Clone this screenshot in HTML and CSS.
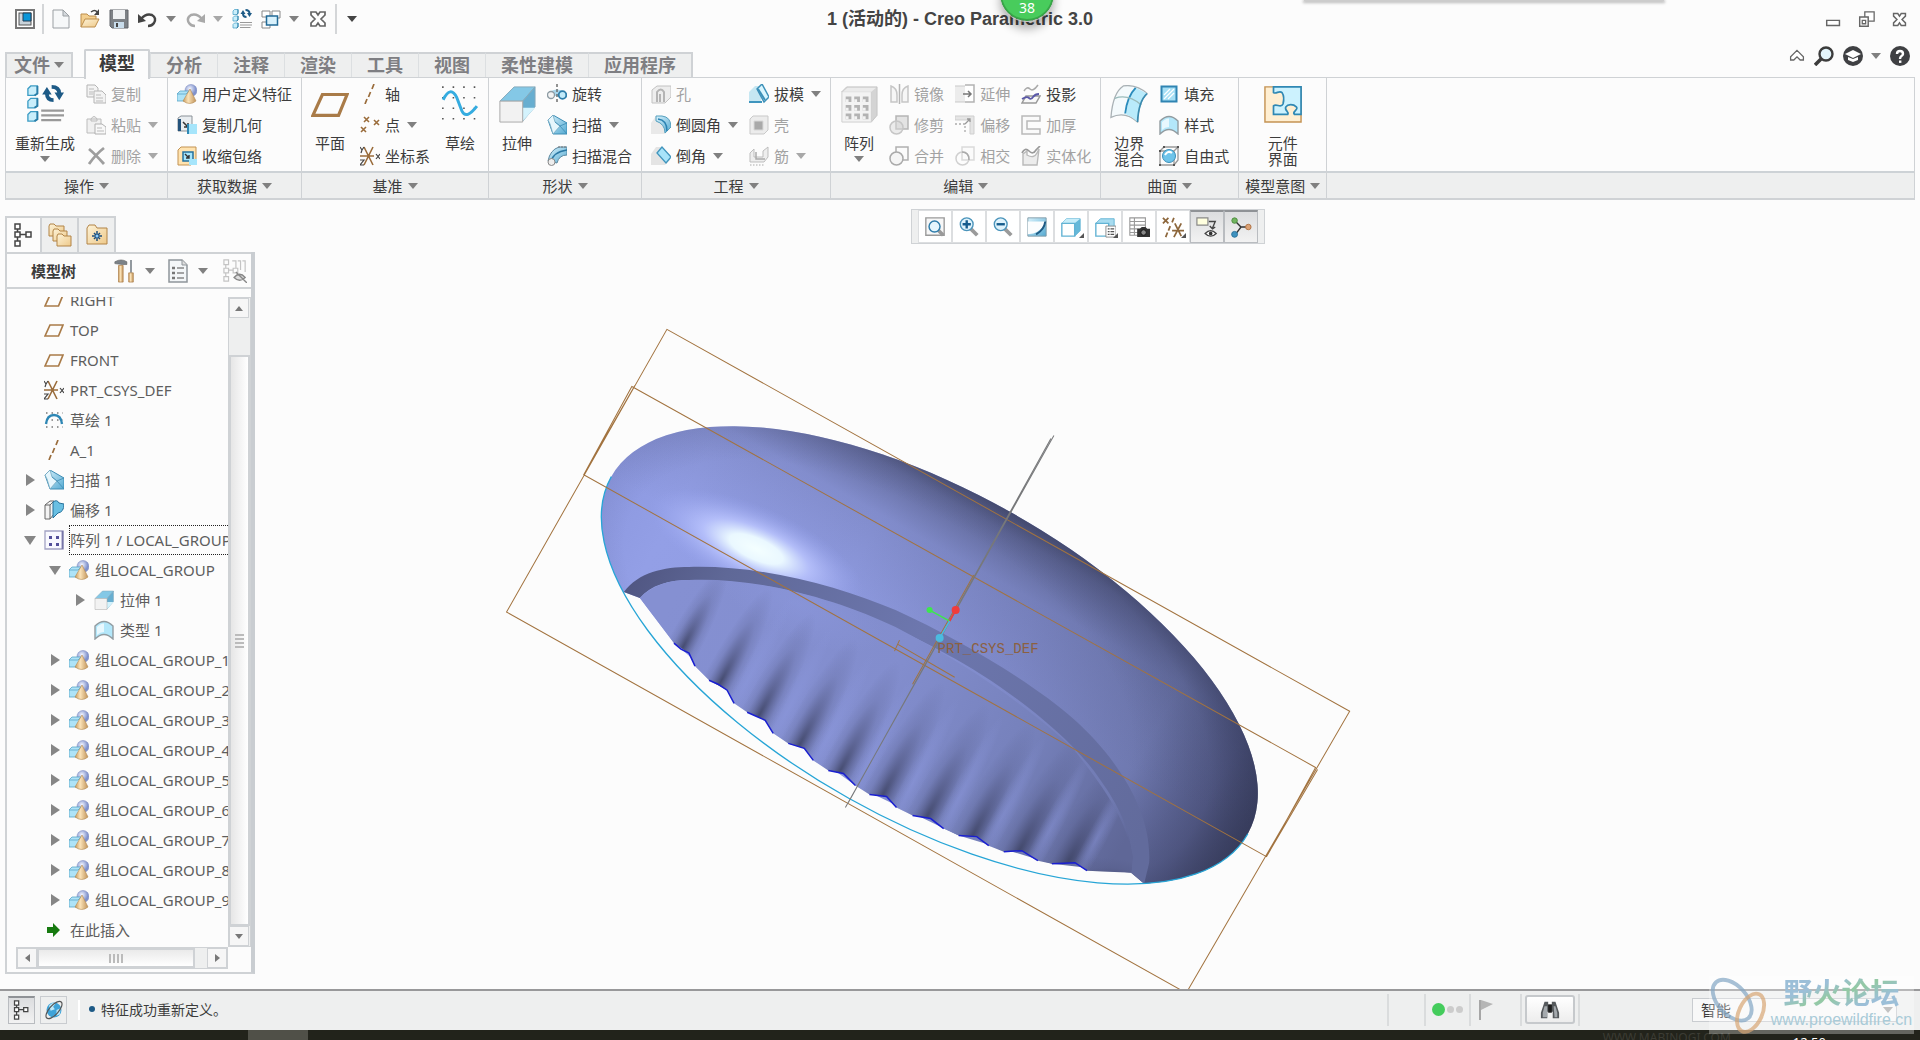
FILE: index.html
```
<!DOCTYPE html>
<html lang="zh-CN">
  <head>
    <meta charset="UTF-8" />
    <meta name="viewport" content="width=device-width, initial-scale=1.0" />
    <title>1 (活动的) - Creo Parametric 3.0</title>
    <link rel="stylesheet" href="styles.css">
  </head>
  <body>
    <!-- shared icons -->
    <svg class="sprite" aria-hidden="true">
      <defs>
        <linearGradient id="gBlue" x1="0" y1="0" x2="1" y2="1">
          <stop offset="0" stop-color="#d8f2fc" />
          <stop offset="1" stop-color="#55aad2" />
        </linearGradient>
        <linearGradient id="gCone" x1="0" x2="1">
          <stop offset="0" stop-color="#c89a5c" />
          <stop offset="0.4" stop-color="#fbe3b8" />
          <stop offset="1" stop-color="#c1935a" />
        </linearGradient>
        <linearGradient id="gFolder" x1="0" y1="0" x2="1" y2="1">
          <stop offset="0" stop-color="#fdf3d8" />
          <stop offset="1" stop-color="#eec98a" />
        </linearGradient>
        <radialGradient id="gBall" cx="0.4" cy="0.35">
          <stop offset="0" stop-color="#f2f5ff" />
          <stop offset="1" stop-color="#8092cc" />
        </radialGradient>
      </defs>
      <symbol id="app" viewBox="0 0 20 20"><rect x="1" y="1" width="18" height="18" fill="#fff" stroke="#777" stroke-width="2" /><rect x="4" y="4" width="12" height="12" fill="#c9d3da" stroke="#555" /><path d="M8 4h8v8H8z" fill="#0a96d8" stroke="#223c55" /></symbol>
      <symbol id="new" viewBox="0 0 20 20"><path d="M2 1h10l6 6v12H2z" fill="#f6f8f9" stroke="#9a9fa3" /><path d="M12 1l6 6h-6z" fill="#d5dade" stroke="#9a9fa3" /></symbol>
      <symbol id="open" viewBox="0 0 20 20"><path d="M1 18V5h6l2 2h7v3" fill="#f3cf8f" stroke="#bd8e4c" /><path d="M1 18l4-8h14l-4 8z" fill="url(#gFolder)" stroke="#bd8e4c" /><path d="M11 3q4-3 6 0" fill="none" stroke="#444" stroke-width="1.500" /><path d="M19 0v6h-5z" fill="#444" /></symbol>
      <symbol id="save" viewBox="0 0 20 20"><path d="M1 1h18v18H3l-2-2z" fill="#7c8186" stroke="#60656a" /><path d="M4 1h12v9H4z" fill="#eef1f3" /><path d="M5 13h10v6H5z" fill="#c8dceb" /><path d="M7 14h2v4H7z" fill="#444" /></symbol>
      <symbol id="undo" viewBox="0 0 20 20"><path d="M3 10q5-6 11-4 5 3 2 8-2 3-6 3" fill="none" stroke="#444" stroke-width="2.400" /><path d="M0 5v9l8-2z" fill="#444" /></symbol>
      <symbol id="redo" viewBox="0 0 20 20"><path d="M17 10q-5-6-11-4-5 3-2 8 2 3 6 3" fill="none" stroke="#a9a9a9" stroke-width="2.400" /><path d="M20 5v9l-8-2z" fill="#a9a9a9" /></symbol>
      <symbol id="regen" viewBox="0 0 40 40"><g fill="#c9eefb" stroke="#3c9cc4" stroke-width="1.400"><path d="M2 4l3-3h7v8l-3 2H2zM2 17l3-3h7v8l-3 2H2zM2 31l3-3h7v8l-3 2H2z" /></g><path d="M9 11l3-2V1M9 24l3-2v-8M9 38l3-2v-8" fill="none" stroke="#2b7ea8" stroke-width="2" /><path d="M16 27h24M16 32h24M16 37h21" stroke="#999" stroke-width="2.400" /><path d="M29 16Q22 16 22 9M27 2q8 0 8 7" fill="none" stroke="#1d5a86" stroke-width="4" /><path d="M17 10h10l-5-8zM30 8h10l-5 8z" fill="#1d5a86" /></symbol>
      <symbol id="windows" viewBox="0 0 20 20"><g fill="#fff" stroke="#888"><path d="M1 2h8v6H1zM1 13h8v6H1zM11 2h8v7h-8z" /></g><rect x="5.500" y="7" width="11" height="9" fill="#d8f1fc" stroke="#226a96" stroke-width="1.500" /></symbol>
      <symbol id="cross" viewBox="0 0 20 20"><path d="M3 3h5l2 3 2-3h5v3l-4 4 4 4v3h-5l-2-3-2 3H3v-3l4-4-4-4z" fill="#fff" stroke="#666" stroke-width="1.700" /></symbol>
      <symbol id="mini" viewBox="0 0 20 20"><path d="M2 11h15v6H2z" fill="#fff" stroke="#666" stroke-width="1.700" /></symbol>
      <symbol id="restore" viewBox="0 0 20 20"><path d="M8 1h11v11H8z" fill="#fff" stroke="#666" stroke-width="1.500" /><path d="M2 7h10v11H2z" fill="#fff" stroke="#666" stroke-width="1.700" /><path d="M5 11h4v4H5z" fill="none" stroke="#666" stroke-width="1.500" /></symbol>
      <symbol id="chev" viewBox="0 0 20 20"><path d="M10 3l8 8v4h-4l-4-4-4 4H2v-4z" fill="#fff" stroke="#666" stroke-width="1.600" /></symbol>
      <symbol id="search" viewBox="0 0 20 20"><circle cx="12" cy="8" r="6.500" fill="#e3f4fb" stroke="#3c3c3c" stroke-width="2.400" /><path d="M7 13l-6 6" stroke="#3c3c3c" stroke-width="3.500" /></symbol>
      <symbol id="grad" viewBox="0 0 20 20"><circle cx="10" cy="10" r="10" fill="#3f4043" /><path d="M2 8l8-4 8 4-8 4zM5 11v3l5 2 5-2v-3l-5 2z" fill="#fff" /></symbol>
      <symbol id="help" viewBox="0 0 20 20"><circle cx="10" cy="10" r="10" fill="#3f4043" /><path d="M7 8q0-3 3-3t3 3q0 1-1.500 2T10 13" fill="none" stroke="#fff" stroke-width="2.400" /><path d="M9 14.500h2.400v2.400H9z" fill="#fff" /></symbol>
      <symbol id="copy" viewBox="0 0 20 20"><g fill="#f3f3f3" stroke="#b5b5b5"><path d="M1 1h8l3 3v9H1z" /><path d="M8 7h8l4 4v8H8z" /></g><path d="M3 5h5M3 8h4M3 10h4M10 11h5M10 14h7M10 17h7" stroke="#bbb" /></symbol>
      <symbol id="paste" viewBox="0 0 20 20"><path d="M1 4h14v14H1zM5 4q3-5 6 0v2H5z" fill="#f0f0f0" stroke="#bcbcbc" /><path d="M9 9h7l4 3v7H9z" fill="#f8f8f8" stroke="#b0b0b0" /><path d="M11 13h5M11 16h7" stroke="#bbb" /></symbol>
      <symbol id="del" viewBox="0 0 20 20"><path d="M3 3q6 5 15 15M18 2Q10 8 3 18" fill="none" stroke="#9e9e9e" stroke-width="2.800" /></symbol>
      <symbol id="udf" viewBox="0 0 20 20"><circle cx="14" cy="6.500" r="6" fill="url(#gBall)" stroke="#8492c4" stroke-width="0.600" /><path d="M0 10l3-3h9l-2 10H0z" fill="#aee3f7" stroke="#59a5c6" stroke-width="0.800" /><path d="M0 10h9l3-3" fill="none" stroke="#59a5c6" stroke-width="0.800" /><path d="M13 5l6 12q-6 5-13 0z" fill="url(#gCone)" stroke="#b48a52" stroke-width="0.600" /></symbol>
      <symbol id="geom" viewBox="0 0 20 20"><path d="M1 3l3-2h11v15H1z" fill="#e9edf0" stroke="#8b9298" /><path d="M1 4h3v12H1z" fill="#24537b" /><path d="M6 7l5 5m0-4v4H7" stroke="#333" stroke-width="1.500" fill="none" /><path d="M11 9h9v10h-9z" fill="#a6e5fb" /><path d="M11 9v10" stroke="#2f88b4" stroke-width="2" /></symbol>
      <symbol id="shrink" viewBox="0 0 20 20"><path d="M1 4l3-3h15v13l-5 5H1z" fill="#ffe3b0" stroke="#c39352" /><path d="M6 6h10v9H6z" fill="#a6e5fb" stroke="#25719e" stroke-width="1.500" /><path d="M8 8l4 4m0-3v3H9" stroke="#333" stroke-width="1.400" fill="none" /><path d="M12 13h8v6h-8z" fill="#a6e5fb" /></symbol>
      <symbol id="plane" viewBox="0 0 20 20"><path d="M6 5h13l-4.500 11H1z" fill="none" stroke="#a97b48" stroke-width="1.700" /></symbol>
      <symbol id="axis" viewBox="0 0 20 20"><path d="M14 0l-2 5M10.500 8l-2 5M7 15l-2 5" stroke="#9a6c3b" stroke-width="1.700" /></symbol>
      <symbol id="points" viewBox="0 0 20 20"><path d="M4 2l5 5m0-5L4 7M14 5l5 5m0-5l-5 5M1 12l5 5m0-5l-5 5" stroke="#9a6c3b" stroke-width="1.600" /></symbol>
      <symbol id="csys" viewBox="0 0 20 20"><path d="M0 10h14M4 1l9 18M13 1L4 19" stroke="#9a6c3b" stroke-width="1.600" /><path d="M0 1l2 3 2-3M2 4L1 7M0 14h4l-4 5h4M16 8l4 5m0-5l-4 5" fill="none" stroke="#444" stroke-width="1.200" /></symbol>
      <symbol id="sketch" viewBox="0 0 36 36"><path d="M1 2h34M1 12h34M1 22h34M1 32h34" stroke="#555" stroke-width="1.500" stroke-dasharray="1.500 8.500" /><path d="M2 14Q9 0 15 12q3 8 5 13 4 8 14-5" fill="none" stroke="#35ace0" stroke-width="2.800" /></symbol>
      <symbol id="extrude" viewBox="0 0 40 40"><path d="M2 17L17 2h22L26 17z" fill="#84c8e6" stroke="#85a9ba" /><path d="M39 2v21L26 38V17z" fill="#67aed0" stroke="#85a9ba" /><path d="M26 24h13L26 38z" fill="#d4f3fd" /><path d="M2 17h24v22H2z" fill="#f2f2f2" stroke="#a8a8a8" /></symbol>
      <symbol id="revolve" viewBox="0 0 20 20"><path d="M4 7q6-3 12 0v5H4z" fill="#84c5e4" opacity="0.700" /><path d="M10 0v20" stroke="#666" stroke-width="1.400" stroke-dasharray="3 2" /><circle cx="4" cy="11" r="3.500" fill="#f3f3f3" stroke="#8d9ba3" stroke-width="1.300" /><circle cx="15.500" cy="11" r="3.800" fill="#c2ebfa" stroke="#2e7eaa" stroke-width="1.800" /></symbol>
      <symbol id="sweep" viewBox="0 0 20 20"><path d="M1 5l5-5 14 8v11H6z" fill="url(#gBlue)" stroke="#3c8cb4" /><path d="M1 5l5-5 2 7 5 4L6 19 3 9z" fill="#e6f6fc" stroke="#75a9c2" stroke-width="0.800" /><path d="M13 11l7 8M8 7l5 4 7-3" stroke="#3c8cb4" fill="none" stroke-width="0.800" /></symbol>
      <symbol id="sblend" viewBox="0 0 20 20"><path d="M1 15Q3 4 12 1h8v8q-8 0-10 8z" fill="url(#gBlue)" stroke="#5b88a0" /><path d="M4 16Q6 6 20 4" fill="none" stroke="#2b78a4" stroke-width="1.500" /><circle cx="4.500" cy="16" r="3.500" fill="#eee" stroke="#888" /><path d="M11 1h9" stroke="#777" stroke-dasharray="2 1" /></symbol>
      <symbol id="hole" viewBox="0 0 20 20"><path d="M1 6l5-4h14v11l-6 6H1z" fill="#ededed" stroke="#c2c2c2" /><path d="M6 18V8q4-5 7 0v10M9 18V10" fill="none" stroke="#b4b4b4" stroke-width="2" /></symbol>
      <symbol id="round" viewBox="0 0 20 20"><path d="M0 8l5-7h6l8 8v5l-5 5H0z" fill="#e9e9e9" /><path d="M5 1h6q9 1 9 11l-6 6q0-9-9-12z" fill="url(#gBlue)" stroke="#559fbe" /><path d="M7 4q9 1 9 12" fill="none" stroke="#2b82b2" stroke-width="1.500" /></symbol>
      <symbol id="chamfer" viewBox="0 0 20 20"><path d="M0 8l5-7h6l8 8v5l-5 5H0z" fill="#e4e4e4" /><path d="M6 7l5-6 9 10-5 6z" fill="#a8e4fa" stroke="#4195bd" stroke-width="1.300" /></symbol>
      <symbol id="draft" viewBox="0 0 20 20"><path d="M0 8l6-6h6v17H0z" fill="#c6e7f2" /><path d="M0 17h13v2H0z" fill="#3f95be" /><path d="M8 5l5-5 7 13-5 5z" fill="#d9f5fe" stroke="#3c90b8" stroke-width="1.500" /><path d="M9 5l7 11" stroke="#3c90b8" stroke-width="2" /></symbol>
      <symbol id="shell" viewBox="0 0 20 20"><path d="M1 4l3-3h15v14l-4 4H1z" fill="#ececec" stroke="#c9c9c9" /><path d="M5 6h9v9H5z" fill="#a9a9a9" stroke="#d8d8d8" /></symbol>
      <symbol id="rib" viewBox="0 0 20 20"><path d="M1 7l4-4v8h9V5l5-4v10l-4 5H1z" fill="#eee" stroke="#bdbdbd" /><path d="M7 6v7h9" fill="none" stroke="#aaa" stroke-width="1.500" /><path d="M1 19h15" stroke="#aaa" stroke-dasharray="1.500 1.500" /></symbol>
      <symbol id="pattern" viewBox="0 0 40 40"><path d="M2 7l5-5h32v30l-6 7z" fill="#d4d4d4" stroke="#c5c5c5" /><path d="M2 7h31v32H2z" fill="#f3f3f3" stroke="#cfcfcf" /><path d="M3 7l5-4h30l-5 4z" fill="#ebebeb" /><g fill="#b3b3b3"><path d="M6 12h6v6H6zM15 12h6v6h-6zM24 12h6v6h-6zM6 21h6v6H6zM15 21h6v6h-6zM24 21h6v6h-6zM6 30h6v6H6zM15 30h6v6h-6zM24 30h6v6h-6z" /></g><g fill="#f3f3f3"><path d="M6 15h3v3H6zM15 15h3v3h-3zM24 15h3v3h-3zM6 24h3v3H6zM15 24h3v3h-3zM24 24h3v3h-3zM6 33h3v3H6zM15 33h3v3h-3zM24 33h3v3h-3z" /></g></symbol>
      <symbol id="mirror" viewBox="0 0 20 20"><path d="M2 2q6 2 6 9v7H2zM19 2q-6 2-6 9v7h6z" fill="#f6f6f6" stroke="#c6c6c6" stroke-width="1.500" /><path d="M10.500 0v20" stroke="#b5b5b5" stroke-width="1.500" /></symbol>
      <symbol id="trim" viewBox="0 0 20 20"><path d="M7 1h12v13H7z" fill="#e3e3e3" stroke="#b5b5b5" stroke-width="1.500" /><circle cx="7.500" cy="12.500" r="6.500" fill="#d9d9d9" fill-opacity="0.500" stroke="#c6c6c6" stroke-width="1.500" /></symbol>
      <symbol id="merge" viewBox="0 0 20 20"><path d="M7 1h12v13H7z" fill="#fbfbfb" stroke="#b0b0b0" stroke-width="1.500" /><circle cx="7.500" cy="12.500" r="6.500" fill="#f5f5f5" stroke="#aaa" stroke-width="1.500" /></symbol>
      <symbol id="inter" viewBox="0 0 20 20"><path d="M7 1h12v13H7z" fill="#fbfbfb" stroke="#dadada" stroke-width="1.500" /><circle cx="7.500" cy="12.500" r="6.500" fill="none" stroke="#d0d0d0" stroke-width="1.500" /><path d="M7 6q7 0 7 8" stroke="#aaa" stroke-width="1.500" fill="none" /></symbol>
      <symbol id="extend" viewBox="0 0 20 20"><path d="M10 1h9v17h-9" fill="#fff" stroke="#b2b2b2" stroke-width="1.500" /><path d="M0 2h10v16H0z" fill="#ececec" /><path d="M0 2h10M0 18h10" stroke="#c9c9c9" /><path d="M8 10h8m-3-3l3 3-3 3" fill="none" stroke="#777" stroke-width="1.500" /></symbol>
      <symbol id="offset" viewBox="0 0 20 20"><path d="M0 1h19v18h-4V5H0z" fill="#e5e5e5" stroke="#cfcfcf" /><path d="M0 9h10v10" fill="none" stroke="#aaa" stroke-width="1.300" stroke-dasharray="2 2" /><path d="M10 9l5-5m-3 0h3v3" fill="none" stroke="#999" stroke-width="1.300" /></symbol>
      <symbol id="project" viewBox="0 0 20 20"><path d="M3 7q3-5 6-2t8-4" fill="none" stroke="#aaa" stroke-width="1.500" /><path d="M5 12h14l-4 7H1z" fill="#f8f8f8" stroke="#999" stroke-width="1.500" /><path d="M1 15q5-3 7-1t4-1 6-3" fill="none" stroke="#5a58a8" stroke-width="1.800" /></symbol>
      <symbol id="thick" viewBox="0 0 20 20"><path d="M1 1h18v5H6v8h13v5H1z" fill="#fafafa" stroke="#b9b9b9" stroke-width="1.500" /></symbol>
      <symbol id="solid" viewBox="0 0 20 20"><path d="M2 8l4-3v4q7 4 10-2l2-4-2 16H2z" fill="#ececec" stroke="#b9b9b9" stroke-width="1.400" /><path d="M1 7q3-6 7-2t7-1l4-4" fill="none" stroke="#999" stroke-width="1.700" /></symbol>
      <symbol id="boundary" viewBox="0 0 40 40"><path d="M1 34Q3 8 14 1q14-2 25 8-9 8-10 30Q16 27 1 34z" fill="#f4fafc" stroke="#a9b1b5" stroke-width="1.400" /><path d="M27 3l12 6q-9 8-10 30-6-6-12-8 2-20 10-28z" fill="#b9ebfb" /><path d="M27 3q-9 9-11 27" fill="none" stroke="#2a8cbc" stroke-width="2" /><path d="M5 14q14-5 28 7" fill="none" stroke="#9bb" stroke-width="1.500" /><path d="M39 9q-9 8-10 30" fill="none" stroke="#3a8bb0" stroke-width="1.800" /></symbol>
      <symbol id="fill" viewBox="0 0 20 20"><path d="M2.500 2.500h15v15h-15z" fill="#a5dff5" stroke="#2f84b2" stroke-width="2" /><path d="M5 11l6-6M5 15L15 5M9 15l6-6" stroke="#fff" stroke-width="1.300" /></symbol>
      <symbol id="style" viewBox="0 0 20 20"><path d="M1 18V6q9-9 18 0v13q-9-9-18 0z" fill="#b3e7fa" stroke="#929ca1" stroke-width="1.400" /><path d="M3 15V7q4-4 7-3.500V12q-4 0-7 3z" fill="#e8f8fe" /></symbol>
      <symbol id="free" viewBox="0 0 20 20"><path d="M1 5l4-4h14v13l-4 5H1zM1 5h14v14M15 5l4-4" fill="none" stroke="#999" stroke-width="1.300" /><circle cx="10" cy="10" r="6.500" fill="#6ec4ea" stroke="#3b8fb9" /><path d="M6 9q3-5 7-2" stroke="#fff" stroke-width="2" fill="none" /><path d="M0 4h2v2H0zM4 0h2v2H4zM18 0h2v2h-2zM0 18h2v2H0zM14 18h2v2h-2z" fill="#555" /></symbol>
      <symbol id="comp" viewBox="0 0 40 40"><path d="M1 2h38v37H1z" fill="#ffefd2" stroke="#c49253" stroke-width="1.500" /><path d="M10 2h29v29h-7c-3-3 5-5 2-8-3-3-9-3-11 0-2 4 4 5 2 8H10v-9c3-3 8 3 10-2 1-4 1-9-1-12-3-3-6 2-9 0z" fill="#ccf2fe" stroke="#2f88b4" stroke-width="1.800" /></symbol>
      <symbol id="tree" viewBox="0 0 20 24"><path d="M1 1h5v5H1zM1 9h5v5H1zM1 18h5v5H1zM12 9h5v5h-5z" fill="#fff" stroke="#444" stroke-width="1.500" /><path d="M3.500 6v3M3.500 14v4M6 11.500h6" stroke="#444" stroke-width="1.500" /></symbol>
      <symbol id="folders" viewBox="0 0 24 24"><g fill="url(#gFolder)" stroke="#b28447"><path d="M1 13V3l1-2h4l2 2h8v10z" /><path d="M5 18V8l1-2h4l2 2h7v10z" /><path d="M9 23V13l1-2h4l2 2h7v10z" /></g></symbol>
      <symbol id="fav" viewBox="0 0 24 24"><path d="M2 21V5l2-3h6l2 3h10v16z" fill="url(#gFolder)" stroke="#b28447" /><path d="M12 8v10M7 13h10M9 10l6 6M15 10l-6 6" stroke="#1c4e7c" stroke-width="1.500" /><circle cx="12" cy="13" r="1.500" fill="#8cf" /></symbol>
      <symbol id="tools" viewBox="0 0 24 26"><path d="M1 3q7-4 13 0v3H9L1 5z" fill="#7b8288" stroke="#555" stroke-width="0.600" /><path d="M5 7h5v18H5z" fill="url(#gCone)" stroke="#a5743c" stroke-width="0.700" /><path d="M18.500 1v14" stroke="#8a9197" stroke-width="2" /><path d="M16 15h5v10h-5z" fill="url(#gCone)" stroke="#a5743c" stroke-width="0.700" /></symbol>
      <symbol id="list" viewBox="0 0 20 24"><path d="M1 1h13l5 5v17H1z" fill="#f3f6f8" stroke="#8f959a" stroke-width="1.500" /><path d="M14 1v5h5" fill="#ddd" stroke="#8f959a" /><path d="M4 9h3M4 14h3M4 19h3" stroke="#777" stroke-width="2.500" /><path d="M9 9h7M9 14h7M9 19h7" stroke="#888" stroke-width="1.500" /></symbol>
      <symbol id="hide" viewBox="0 0 26 26"><path d="M1 1h5v5H1zM1 10h5v5H1zM1 19h5v5H1zM11 10h5v5h-5zM3 6v4M3 15v4M6 12h5M10 2h4v8M16 2h3v10M21 2h3v12" fill="none" stroke="#c4c4c4" stroke-width="1.300" /><path d="M12 20q6-7 12 0-6 6-12 0zM14 14l12 12" fill="#ddd" stroke="#888" stroke-width="1.500" /></symbol>
      <symbol id="arc" viewBox="0 0 20 20"><path d="M2 3h17M2 10h17M2 17h17" stroke="#777" stroke-dasharray="1.500 4" stroke-width="1.500" /><path d="M2 14Q3 5 10 5t8 9" fill="none" stroke="#2d86b4" stroke-width="2.400" /></symbol>
      <symbol id="offt" viewBox="0 0 20 20"><path d="M1 5l5-4h4v13l-4 5H1zM1 5h5v14M6 5l4-4" fill="#f3f3f3" stroke="#666" /><path d="M9 2q4-3 6 1l5 1q0 8-6 9l-5 5z" fill="#69bfe2" stroke="#27719a" /></symbol>
      <symbol id="ptrn" viewBox="0 0 20 20"><path d="M1 1h18v18H1z" fill="#f9f9ff" stroke="#a3a3c4" stroke-width="1.300" /><path d="M18.500 1v18" stroke="#7775a8" stroke-width="1.800" /><path d="M5 6h3v3H5zM12 6h3v3h-3zM5 13h3v3H5zM12 13h3v3h-3z" fill="#54509a" /></symbol>
      <symbol id="insert" viewBox="0 0 20 20"><path d="M3 7h6V3l7 7-7 7v-4H3z" fill="#177a10" /></symbol>
      <symbol id="zfit" viewBox="0 0 24 24"><path d="M2 2h20v19H2z" fill="#f7f7f7" stroke="#9a9a9a" stroke-width="1.500" /><path d="M15 15l6 6" stroke="#9a9a9a" stroke-width="4" /><circle cx="11.500" cy="11.500" r="6" fill="#e5f6fd" stroke="#2f7dab" stroke-width="1.600" /></symbol>
      <symbol id="zin" viewBox="0 0 24 24"><path d="M14 14l7 7" stroke="#9a9a9a" stroke-width="4" /><circle cx="9.500" cy="9" r="7" fill="#dff3fc" stroke="#4b94bb" stroke-width="1.500" /><path d="M5 9h9M9.500 4.500v9" stroke="#155c8d" stroke-width="2.600" /></symbol>
      <symbol id="zout" viewBox="0 0 24 24"><path d="M14 14l7 7" stroke="#9a9a9a" stroke-width="4" /><circle cx="9.500" cy="9" r="7" fill="#dff3fc" stroke="#4b94bb" stroke-width="1.500" /><path d="M5 9h9" stroke="#155c8d" stroke-width="2.600" /></symbol>
      <symbol id="repaint" viewBox="0 0 24 24"><path d="M2 2h20v20H2z" fill="url(#gBlue)" stroke="#809aa6" /><path d="M2 6h19q-3 10-13 13l-6 1z" fill="#fbfdfe" /><path d="M21 6q-1 9-10 14" fill="none" stroke="#1f5a83" stroke-width="2.200" /></symbol>
      <symbol id="cube" viewBox="0 0 24 24"><path d="M2 8l5-5h15v13l-6 6z" fill="#65b8d9" stroke="#62b3d4" /><path d="M2 8h14l6-5H7z" fill="#c7edf9" /><path d="M2 8h14v14H2z" fill="#fff" stroke="#62b3d4" stroke-width="1.500" /></symbol>
      <symbol id="cubelist" viewBox="0 0 24 24"><path d="M2 8l5-5h15v13l-6 6z" fill="#a8dcf0" stroke="#62b3d4" /><path d="M2 8h14v14H2z" fill="#fff" stroke="#62b3d4" stroke-width="1.500" /><path d="M13 11h11v12H13z" fill="#fff" stroke="#888" /><path d="M15 14h2m1 0h4M15 17h2m1 0h4M15 20h2m1 0h4" stroke="#555" stroke-width="1.300" /></symbol>
      <symbol id="camera" viewBox="0 0 24 24"><path d="M2 2h17v19H2zM2 6h17M2 10h17M2 14h17M2 18h17M7 2v19" fill="#fff" stroke="#999" stroke-width="1.200" /><path d="M10 14h3l2-2h4l2 2h3v9H10z" fill="#333" /><circle cx="17" cy="18" r="3" fill="#888" stroke="#111" /></symbol>
      <symbol id="datum" viewBox="0 0 24 24"><path d="M1 2l6 6m0-6L1 8M13 2l-2 5M9 11l-2 5M6 18l-2 5M11 16h13M14 8l7 14M21 8l-8 15" stroke="#8d673c" stroke-width="1.900" /></symbol>
      <symbol id="annot" viewBox="0 0 24 24"><path d="M1 2h12v8H1z" fill="#ffffdf" stroke="#888" stroke-width="1.300" /><path d="M14 6h7l-3 7m-3-2l3 3 3-2" fill="none" stroke="#444" stroke-width="1.500" /><path d="M10 19q6-6 12 0-6 6-12 0z" fill="#fff" stroke="#444" stroke-width="1.500" /><circle cx="16" cy="19" r="2" fill="#333" /></symbol>
      <symbol id="spin" viewBox="0 0 24 24"><path d="M5 5l7 7h8M12 12l-6 8" fill="none" stroke="#333" stroke-width="1.500" /><circle cx="5" cy="5" r="3" fill="#71b45f" stroke="#4b8a3d" /><circle cx="5" cy="20" r="3.200" fill="#3f92bf" stroke="#27719a" /><circle cx="20" cy="12" r="3" fill="#dca276" stroke="#ae7142" /></symbol>
      <symbol id="globe" viewBox="0 0 24 24"><circle cx="12" cy="12" r="9" fill="#3fa3d8" /><path d="M6 7q4-5 8-3l-3 4 2 3-5 2zM15 12l5-2-1 7-4 2z" fill="#bfe8f8" /><ellipse cx="12" cy="12" rx="13" ry="5.500" transform="rotate(-48 12 12)" fill="none" stroke="#555" stroke-width="1.400" /></symbol>
      <symbol id="flag" viewBox="0 0 20 20"><path d="M4 0v20" stroke="#a6a6a6" stroke-width="2" /><path d="M5 0l12 4-12 6z" fill="#b5b5b5" /></symbol>
      <symbol id="bino" viewBox="0 0 22 20"><path d="M5 1h4v3h4V1h4l4 12v6h-7v-7H8v7H1v-6z" fill="#55595c" /><path d="M5 6h3v12H3v-5zM15 6h2l2 7v5h-3z" fill="#a4a9ad" /><path d="M9 4h4v9H9z" fill="#1d1d1d" /></symbol>
    </svg>

    <div class="edge-shadow"></div>
    <div class="badge">38</div>

    <header class="titlebar">
      <div class="quick">
        <button><svg><use href="#app" /></svg></button>
        <i class="sep"></i>
        <button><svg><use href="#new" /></svg></button>
        <button><svg><use href="#open" /></svg></button>
        <button><svg><use href="#save" /></svg></button>
        <button><svg><use href="#undo" /></svg><i class="caret"></i></button>
        <button><svg><use href="#redo" /></svg><i class="caret dim"></i></button>
        <button><svg><use href="#regen" /></svg></button>
        <button><svg><use href="#windows" /></svg><i class="caret"></i></button>
        <button><svg><use href="#cross" /></svg></button>
        <i class="sep"></i>
        <button><i class="caret more"></i></button>
      </div>
      <h1>1 (活动的) - Creo Parametric 3.0</h1>
      <div class="win">
        <button><svg><use href="#mini" /></svg></button>
        <button><svg><use href="#restore" /></svg></button>
        <button><svg><use href="#cross" /></svg></button>
      </div>
    </header>

    <nav class="tabs">
      <button class="tab file">文件<i class="caret"></i></button>
      <button class="tab active">模型</button>
      <button class="tab">分析</button>
      <button class="tab">注释</button>
      <button class="tab">渲染</button>
      <button class="tab">工具</button>
      <button class="tab">视图</button>
      <button class="tab">柔性建模</button>
      <button class="tab last">应用程序</button>
      <div class="tab-tools">
        <button><svg class="small"><use href="#chev" /></svg></button>
        <button><svg><use href="#search" /></svg></button>
        <button><svg><use href="#grad" /></svg><i class="caret"></i></button>
        <button><svg><use href="#help" /></svg></button>
      </div>
    </nav>

    <section class="ribbon">
      <div class="group">
        <div class="group-body">
          <button class="big"><svg><use href="#regen" /></svg><span>重新生成</span><i class="caret"></i></button>
          <div class="col">
            <button class="off"><svg><use href="#copy" /></svg>复制</button>
            <button class="off"><svg><use href="#paste" /></svg>粘贴<i class="caret dim"></i></button>
            <button class="off"><svg><use href="#del" /></svg>删除<i class="caret dim"></i></button>
          </div>
        </div>
        <button class="group-name">操作<i class="caret"></i></button>
      </div>
      <div class="group">
        <div class="group-body">
          <div class="col">
            <button><svg><use href="#udf" /></svg>用户定义特征</button>
            <button><svg><use href="#geom" /></svg>复制几何</button>
            <button><svg><use href="#shrink" /></svg>收缩包络</button>
          </div>
        </div>
        <button class="group-name">获取数据<i class="caret"></i></button>
      </div>
      <div class="group">
        <div class="group-body">
          <button class="big"><svg><use href="#plane" /></svg><span>平面</span></button>
          <div class="col">
            <button><svg><use href="#axis" /></svg>轴</button>
            <button><svg><use href="#points" /></svg>点<i class="caret"></i></button>
            <button><svg><use href="#csys" /></svg>坐标系</button>
          </div>
          <button class="big"><svg><use href="#sketch" /></svg><span>草绘</span></button>
        </div>
        <button class="group-name">基准<i class="caret"></i></button>
      </div>
      <div class="group">
        <div class="group-body">
          <button class="big"><svg><use href="#extrude" /></svg><span>拉伸</span></button>
          <div class="col">
            <button><svg><use href="#revolve" /></svg>旋转</button>
            <button><svg><use href="#sweep" /></svg>扫描<i class="caret"></i></button>
            <button><svg><use href="#sblend" /></svg>扫描混合</button>
          </div>
        </div>
        <button class="group-name">形状<i class="caret"></i></button>
      </div>
      <div class="group">
        <div class="group-body">
          <div class="col">
            <button class="off"><svg><use href="#hole" /></svg>孔</button>
            <button><svg><use href="#round" /></svg>倒圆角<i class="caret"></i></button>
            <button><svg><use href="#chamfer" /></svg>倒角<i class="caret"></i></button>
          </div>
          <div class="col">
            <button><svg><use href="#draft" /></svg>拔模<i class="caret"></i></button>
            <button class="off"><svg><use href="#shell" /></svg>壳</button>
            <button class="off"><svg><use href="#rib" /></svg>筋<i class="caret dim"></i></button>
          </div>
        </div>
        <button class="group-name">工程<i class="caret"></i></button>
      </div>
      <div class="group">
        <div class="group-body">
          <button class="big"><svg><use href="#pattern" /></svg><span>阵列</span><i class="caret"></i></button>
          <div class="col">
            <button class="off"><svg><use href="#mirror" /></svg>镜像</button>
            <button class="off"><svg><use href="#trim" /></svg>修剪</button>
            <button class="off"><svg><use href="#merge" /></svg>合并</button>
          </div>
          <div class="col">
            <button class="off"><svg><use href="#extend" /></svg>延伸</button>
            <button class="off"><svg><use href="#offset" /></svg>偏移</button>
            <button class="off"><svg><use href="#inter" /></svg>相交</button>
          </div>
          <div class="col">
            <button><svg><use href="#project" /></svg>投影</button>
            <button class="off"><svg><use href="#thick" /></svg>加厚</button>
            <button class="off"><svg><use href="#solid" /></svg>实体化</button>
          </div>
        </div>
        <button class="group-name">编辑<i class="caret"></i></button>
      </div>
      <div class="group">
        <div class="group-body">
          <button class="big"><svg><use href="#boundary" /></svg><span>边界<br>混合</span></button>
          <div class="col">
            <button><svg><use href="#fill" /></svg>填充</button>
            <button><svg><use href="#style" /></svg>样式</button>
            <button><svg><use href="#free" /></svg>自由式</button>
          </div>
        </div>
        <button class="group-name">曲面<i class="caret"></i></button>
      </div>
      <div class="group">
        <div class="group-body">
          <button class="big"><svg><use href="#comp" /></svg><span>元件<br>界面</span></button>
        </div>
        <button class="group-name">模型意图<i class="caret"></i></button>
      </div>
      <div class="group rest">
        <div class="group-body"></div>
        <div class="group-name"></div>
      </div>
    </section>

    <main class="work">
      <aside class="side">
        <div class="side-tabs">
          <button class="active"><svg><use href="#tree" /></svg></button>
          <button><svg><use href="#folders" /></svg></button>
          <button><svg><use href="#fav" /></svg></button>
        </div>
        <div class="panel">
          <div class="panel-head">
            <h2>模型树</h2>
            <button><svg><use href="#tools" /></svg><i class="caret"></i></button>
            <button><svg><use href="#list" /></svg><i class="caret"></i></button>
            <button class="hide"><svg><use href="#hide" /></svg></button>
          </div>
          <div class="panel-body">
            <div class="panel-list">
              <ul class="tree">
                <li><i class="twist"></i><svg><use href="#plane" /></svg>RIGHT</li>
                <li><i class="twist"></i><svg><use href="#plane" /></svg>TOP</li>
                <li><i class="twist"></i><svg><use href="#plane" /></svg>FRONT</li>
                <li><i class="twist"></i><svg><use href="#csys" /></svg>PRT_CSYS_DEF</li>
                <li><i class="twist"></i><svg><use href="#arc" /></svg>草绘 1</li>
                <li><i class="twist"></i><svg><use href="#axis" /></svg>A_1</li>
                <li><i class="twist closed"></i><svg><use href="#sweep" /></svg>扫描 1</li>
                <li><i class="twist closed"></i><svg><use href="#offt" /></svg>偏移 1</li>
                <li><i class="twist opened"></i><svg><use href="#ptrn" /></svg><span class="focus">阵列 1 / LOCAL_GROUP</span></li>
                <li class="l2"><i class="twist opened"></i><svg><use href="#udf" /></svg>组LOCAL_GROUP</li>
                <li class="l3"><i class="twist closed"></i><svg><use href="#extrude" /></svg>拉伸 1</li>
                <li class="l3"><i class="twist"></i><svg><use href="#style" /></svg>类型 1</li>
                <li class="l2"><i class="twist closed"></i><svg><use href="#udf" /></svg>组LOCAL_GROUP_1</li>
                <li class="l2"><i class="twist closed"></i><svg><use href="#udf" /></svg>组LOCAL_GROUP_2</li>
                <li class="l2"><i class="twist closed"></i><svg><use href="#udf" /></svg>组LOCAL_GROUP_3</li>
                <li class="l2"><i class="twist closed"></i><svg><use href="#udf" /></svg>组LOCAL_GROUP_4</li>
                <li class="l2"><i class="twist closed"></i><svg><use href="#udf" /></svg>组LOCAL_GROUP_5</li>
                <li class="l2"><i class="twist closed"></i><svg><use href="#udf" /></svg>组LOCAL_GROUP_6</li>
                <li class="l2"><i class="twist closed"></i><svg><use href="#udf" /></svg>组LOCAL_GROUP_7</li>
                <li class="l2"><i class="twist closed"></i><svg><use href="#udf" /></svg>组LOCAL_GROUP_8</li>
                <li class="l2"><i class="twist closed"></i><svg><use href="#udf" /></svg>组LOCAL_GROUP_9</li>
                <li><i class="twist"></i><svg><use href="#insert" /></svg>在此插入</li>
              </ul>
              <div class="hbar">
                <button class="bar-btn"><i class="arrow left"></i></button>
                <div class="thumb"><i class="grip"></i></div>
                <button class="bar-btn"><i class="arrow right"></i></button>
              </div>
            </div>
            <div class="vbar">
              <button class="bar-btn"><i class="arrow up"></i></button>
              <div class="thumb"><i class="grip"></i></div>
              <button class="bar-btn"><i class="arrow down"></i></button>
            </div>
          </div>
        </div>
      </aside>

      <div class="view">
        <div class="view-tools">
          <button><svg><use href="#zfit" /></svg></button>
          <button><svg><use href="#zin" /></svg></button>
          <button><svg><use href="#zout" /></svg></button>
          <button><svg><use href="#repaint" /></svg></button>
          <button class="menu"><svg><use href="#cube" /></svg></button>
          <button class="menu"><svg><use href="#cubelist" /></svg></button>
          <button><svg><use href="#camera" /></svg></button>
          <button class="menu"><svg><use href="#datum" /></svg></button>
          <button class="on"><svg><use href="#annot" /></svg></button>
          <button class="on"><svg><use href="#spin" /></svg></button>
        </div>
        <svg class="model" viewBox="255 202 1665 787" preserveAspectRatio="xMidYMid slice">
          <defs>
            <linearGradient id="bodyU" gradientUnits="userSpaceOnUse" x1="-364" y1="0" x2="364" y2="0">
              <stop offset="0" stop-color="#8c98df" />
              <stop offset="0.1" stop-color="#939fe6" />
              <stop offset="0.35" stop-color="#909ce2" />
              <stop offset="0.6" stop-color="#808bcb" />
              <stop offset="0.82" stop-color="#6f79b0" />
              <stop offset="0.93" stop-color="#545b88" />
              <stop offset="1" stop-color="#3b405f" />
            </linearGradient>
            <linearGradient id="bodyV" gradientUnits="userSpaceOnUse" x1="0" y1="-164" x2="0" y2="0">
              <stop offset="0" stop-color="#383d5b" stop-opacity="0.8" />
              <stop offset="0.12" stop-color="#3d4263" stop-opacity="0.55" />
              <stop offset="0.4" stop-color="#454b70" stop-opacity="0.2" />
              <stop offset="1" stop-color="#454b70" stop-opacity="0" />
            </linearGradient>
            <radialGradient id="rim" gradientUnits="userSpaceOnUse" cx="-50" cy="30" r="430" gradientTransform="scale(1 0.5)">
              <stop offset="0.65" stop-color="#34395a" stop-opacity="0" />
              <stop offset="0.85" stop-color="#34395a" stop-opacity="0.2" />
              <stop offset="1" stop-color="#34395a" stop-opacity="0.7" />
            </radialGradient>
            <radialGradient id="shine">
              <stop offset="0" stop-color="#f4ffff" />
              <stop offset="0.25" stop-color="#eaf8ff" />
              <stop offset="0.5" stop-color="#bcc6ff" stop-opacity="0.8" />
              <stop offset="1" stop-color="#98a4f0" stop-opacity="0" />
            </radialGradient>
            <linearGradient id="band" gradientUnits="userSpaceOnUse" x1="625" y1="590" x2="1140" y2="840">
              <stop offset="0" stop-color="#505682" />
              <stop offset="0.15" stop-color="#5f6897" />
              <stop offset="0.5" stop-color="#6d77ae" />
              <stop offset="1" stop-color="#626b9c" />
            </linearGradient>
            <linearGradient id="face" gradientUnits="userSpaceOnUse" x1="680" y1="590" x2="1120" y2="850">
              <stop offset="0" stop-color="#8590d2" />
              <stop offset="0.45" stop-color="#828dcd" />
              <stop offset="0.75" stop-color="#7580ba" />
              <stop offset="1" stop-color="#5f6797" />
            </linearGradient>
            <radialGradient id="rib-dark">
              <stop offset="0" stop-color="#363b58" stop-opacity="0.8" />
              <stop offset="0.3" stop-color="#3d4264" stop-opacity="0.48" />
              <stop offset="0.65" stop-color="#474d74" stop-opacity="0.16" />
              <stop offset="1" stop-color="#474d74" stop-opacity="0" />
            </radialGradient>
            <radialGradient id="rib-light">
              <stop offset="0" stop-color="#8d99df" stop-opacity="0.5" />
              <stop offset="1" stop-color="#8d99df" stop-opacity="0" />
            </radialGradient>
            <clipPath id="face-clip">
              <path d="M641 599C655 585 672 581 690 581 760 578 840 601 896 628 965 664 1030 708 1074 750 1105 790 1125 818 1133 857L1131 873 1087 871 1075 863 1052 864 1038 861 1022 851 1004 852 989 846 977 837 959 836 944 829 931 819 913 816 897 808 887 797 870 795 856 786 844 774 829 771 814 761 805 749 789 744 774 734 766 721 748 713 735 704 728 691 710 681 696 667 690 654 675 644z" />
            </clipPath>
          </defs>
          <g transform="translate(930 656) rotate(29.300)">
            <ellipse rx="364" ry="164" fill="url(#bodyU)" />
            <ellipse rx="364" ry="164" fill="url(#bodyV)" />
            <ellipse rx="364" ry="164" fill="url(#rim)" />
          </g>
          <ellipse cx="757" cy="550" rx="115" ry="42" transform="rotate(24 757 550)" fill="url(#shine)" />

          <!-- cut-away -->
          <path d="M625 593L641 599 675 644 766 721 856 786 959 836 1052 864 1131 873 1144 884 1144 900 980 890 780 790 610 640z" fill="#fcfcfc" />
          <path d="M625 593C640 573 665 568 690 568 765 566 840 588 896 611 960 640 1035 685 1074 720 1115 757 1152 810 1149 863L1144 884 1131 873C1136 840 1120 808 1100 780 1070 735 1000 683 947 655 860 608 780 580 690 581 670 581 652 586 641 599z" fill="url(#band)" />
          <g clip-path="url(#face-clip)">
            <rect x="600" y="560" width="560" height="330" fill="url(#face)" />
            <ellipse cx="800" cy="605" rx="90" ry="35" transform="rotate(24 800 605)" fill="url(#rib-light)" />
            <g fill="url(#rib-dark)">
              <ellipse cx="684" cy="648" rx="90" ry="17" transform="rotate(-62 684 648)" />
              <ellipse cx="722" cy="682" rx="105" ry="18" transform="rotate(-62 722 682)" />
              <ellipse cx="760" cy="716" rx="115" ry="19" transform="rotate(-62 760 716)" />
              <ellipse cx="800" cy="746" rx="120" ry="20" transform="rotate(-62 800 746)" />
              <ellipse cx="840" cy="773" rx="125" ry="20" transform="rotate(-62 840 773)" />
              <ellipse cx="882" cy="798" rx="130" ry="21" transform="rotate(-62 882 798)" />
              <ellipse cx="926" cy="820" rx="130" ry="21" transform="rotate(-62 926 820)" />
              <ellipse cx="972" cy="838" rx="130" ry="22" transform="rotate(-62 972 838)" />
              <ellipse cx="1018" cy="854" rx="130" ry="23" transform="rotate(-62 1018 854)" />
              <ellipse cx="1066" cy="867" rx="120" ry="24" transform="rotate(-62 1066 867)" />
              <ellipse cx="1120" cy="886" rx="70" ry="26" transform="rotate(10 1120 886)" />
            </g>
            <g fill="url(#rib-light)">
              <ellipse cx="749" cy="680" rx="95" ry="10" transform="rotate(-62 749 680)" />
              <ellipse cx="788" cy="712" rx="95" ry="10" transform="rotate(-62 788 712)" />
              <ellipse cx="829" cy="738" rx="95" ry="10" transform="rotate(-62 829 738)" />
              <ellipse cx="871" cy="760" rx="95" ry="10" transform="rotate(-62 871 760)" />
              <ellipse cx="914" cy="782" rx="95" ry="10" transform="rotate(-62 914 782)" />
              <ellipse cx="958" cy="800" rx="95" ry="10" transform="rotate(-62 958 800)" />
              <ellipse cx="1003" cy="816" rx="90" ry="10" transform="rotate(-62 1003 816)" />
              <ellipse cx="1050" cy="830" rx="85" ry="10" transform="rotate(-62 1050 830)" />
              <ellipse cx="1096" cy="840" rx="75" ry="10" transform="rotate(-62 1096 840)" />
            </g>
          </g>
          <path class="wave" d="M675 644l7 6 8 4 6 13M710 681l9 4 9 6 7 13M748 713l9 4 9 4 8 13M789 744l16 5 9 12M829 771l15 3 12 12M870 795l17 2 10 11M913 816l18 3 13 10M959 836l18 1 12 9M1004 852l18-1 16 10M1052 864l23-1 12 8" />
          <path class="curve" d="M-364 0A364 164 0 0 0 364 0" transform="translate(930 656) rotate(29.300)" />

          <!-- datum planes and axis -->
          <path class="plane" d="M668 331L1349 712 1186 993 508 613zM585 476L633 388 1315 768 1266 857zM585 476L636 387M1266 857L1317 770M898 645l57 33M895 652l5-11M974 576L913 685" />
          <path class="axis" d="M1054 437L846 808M1051 440L849 803" />
          <path d="M950 622l-20-11" stroke="#3ce84c" stroke-width="1.500" />
          <path d="M950 622l6-11" stroke="#f03c3c" stroke-width="1.500" />
          <path d="M950 622l-10 17" stroke="#4bbbe0" stroke-width="1.500" />
          <circle cx="930" cy="611" r="3" fill="#3ce84c" />
          <circle cx="956" cy="611" r="4" fill="#f03c3c" />
          <circle cx="940" cy="639" r="4" fill="#4bbbe0" />
          <text class="csys-label" x="938" y="654">PRT_CSYS_DEF</text>
        </svg>
      </div>
    </main>

    <footer class="status">
      <button class="on"><svg><use href="#tree" /></svg></button>
      <button><svg><use href="#globe" /></svg></button>
      <p class="message">特征成功重新定义。</p>
      <div class="cell"></div>
      <div class="cell lights"><i class="ok"></i><i></i><i></i></div>
      <div class="cell flag"><svg><use href="#flag" /></svg></div>
      <div class="cell find"><button><svg><use href="#bino" /></svg></button></div>
      <div class="cell filter">
        <select aria-label="选择过滤器"><option>智能</option></select>
        <i class="caret"></i>
      </div>
    </footer>
    <div class="taskbar"><i></i><span class="wall">WWW.MABINOGI.COM</span><time>12:50</time></div>

    <div class="watermark">
      <svg viewBox="0 0 60 60"><ellipse cx="24" cy="25" rx="25" ry="15" transform="rotate(48 24 25)" /><ellipse class="flame" cx="43" cy="38" rx="21" ry="12" transform="rotate(-65 43 38)" /></svg>
      <div><strong>野火论坛</strong><span>www.proewildfire.cn</span></div>
    </div>
  </body>
</html>
```

FILE: styles.css
```
* {
  box-sizing: border-box;
}

body {
  margin: 0;
  height: 100vh;
  display: flex;
  flex-direction: column;
  overflow: hidden;
  position: relative;
  background: #fcfcfc;
  color: #3c3c3c;
  font-family: "Noto Sans", "Noto Sans CJK SC", sans-serif;
  font-size: 15px;
  line-height: 20px;
}

button {
  display: flex;
  align-items: center;
  margin: 0;
  padding: 0;
  border: none;
  background: none;
  color: inherit;
  font: inherit;
  white-space: nowrap;
  cursor: pointer;
}

svg {
  display: block;
  flex: none;
  width: 20px;
  height: 20px;
}

.sprite {
  position: absolute;
  width: 0;
  height: 0;
}

.caret {
  border: 5px solid transparent;
  border-top: 6px solid #808080;
  border-bottom: 0;
  margin-left: 8px;
}

.caret.dim {
  border-top-color: #a8a8a8;
}

/* title bar */
.titlebar {
  display: grid;
  grid-template-columns: 1fr auto 1fr;
  align-items: center;
  flex: none;
  height: 40px;
  padding-bottom: 2px;
}

.titlebar h1 {
  margin: 0;
  color: #444;
  font-family: "Liberation Sans", "Noto Sans CJK SC", sans-serif;
  font-size: 18px;
  line-height: 20px;
}

.quick {
  display: flex;
  align-items: center;
  gap: 9px;
  padding-left: 15px;
}

.quick .sep {
  width: 2px;
  height: 30px;
  margin: 0 -2px;
  background: #d4d6d8;
}

.quick .more {
  margin: 0 3px;
  border-top-color: #444;
}

.win {
  display: flex;
  justify-content: flex-end;
  gap: 16px;
  padding-right: 12px;
}

.win svg {
  width: 17px;
  height: 17px;
}

.badge {
  position: absolute;
  z-index: 2;
  left: 1000px;
  top: -33px;
  width: 54px;
  height: 54px;
  padding-top: 29px;
  border: 2px solid #38a548;
  border-radius: 50%;
  outline: 1px solid #ccc;
  background: #48cc5c;
  box-shadow: 0 8px 10px rgba(0, 0, 0, 0.3);
  color: #fff;
  font-size: 14px;
  text-align: center;
}

.edge-shadow {
  position: absolute;
  right: 256px;
  top: 0;
  width: 360px;
  height: 1px;
  background: #ccc;
  box-shadow: 0 1px 3px 1px #bbb;
}

/* tabs */
.tabs {
  display: flex;
  align-items: flex-end;
  flex: none;
  height: 38px;
  padding-left: 5px;
}

.tab {
  justify-content: center;
  height: 26px;
  padding: 0 15px 3px;
  border-top: 2px solid #cfd2d5;
  border-left: 1px solid #dcdfe1;
  background: #eeefef;
  color: #7e7e82;
  font-size: 18px;
  font-weight: 700;
  line-height: 20px;
}

.tab.file {
  margin-right: 11px;
  padding: 0 7px 3px;
  border-left: 2px solid #cfd2d5;
  border-right: 2px solid #cfd2d5;
}

.tab.file .caret {
  margin-left: 4px;
}

.tab.active {
  height: 30px;
  margin-bottom: -1px;
  padding: 0 13px 5px;
  border: 2px solid #cfd2d5;
  border-bottom: 0;
  border-radius: 2px 2px 0 0;
  background: #fcfcfc;
  color: #3c3c3c;
  position: relative;
}

.tab.last {
  border-right: 2px solid #cfd2d5;
}

.tab-tools {
  display: flex;
  align-items: center;
  align-self: flex-start;
  gap: 9px;
  margin-left: auto;
  padding: 6px 10px 0 0;
}

.tab-tools .small {
  width: 16px;
  height: 16px;
}

/* ribbon */
.ribbon {
  display: flex;
  flex: none;
  margin: -1px 5px 0;
  border: 1px solid #cfd2d5;
  border-bottom-width: 2px;
}

.group {
  display: flex;
  flex-direction: column;
  border-right: 1px solid #cfd2d5;
}

.group.rest {
  flex: 1;
  border-right: 0;
}

.group-body {
  display: flex;
  flex: 1;
  justify-content: center;
  gap: 11px;
  height: 97px;
  padding: 0 9px;
}

.group-name {
  justify-content: center;
  height: 27px;
  padding: 0 6px;
  border-top: 2px solid #cdd2d6;
  background: #eeefef;
}

.group-name .caret {
  margin-left: 5px;
}

.col {
  display: flex;
  flex-direction: column;
}

.col button {
  gap: 5px;
  height: 31px;
}

.col .caret {
  margin-left: 2px;
}

.off {
  color: #a2a2a2;
}

.big {
  flex-direction: column;
  min-width: 38px;
  padding-top: 7px;
  line-height: 16px;
}

.big svg {
  width: 38px;
  height: 38px;
  margin-bottom: 7px;
}

.big span {
  padding-top: 5px;
}

.big .caret {
  margin: 5px 0 0;
}

/* work area */
.work {
  display: flex;
  flex: 1;
  min-height: 0;
}

.side {
  display: flex;
  flex-direction: column;
  width: 255px;
  padding: 16px 0 15px 5px;
}

.side-tabs {
  display: flex;
}

.side-tabs button {
  justify-content: center;
  width: 37px;
  height: 36px;
  border: 2px solid #cfd2d5;
  border-left-width: 0;
  border-bottom: 0;
  background: #eeefef;
}

.side-tabs .active {
  border-left-width: 2px;
  background: #fcfcfc;
}

.side-tabs svg,
.panel-head svg {
  width: 24px;
  height: 24px;
}

.panel {
  display: flex;
  flex: 1;
  flex-direction: column;
  min-height: 0;
  border: 2px solid #cfd2d5;
  border-top: 0;
  border-right: 4px solid #c9cdd1;
}

.panel-head {
  display: flex;
  align-items: center;
  height: 37px;
  padding: 0 4px 0 24px;
  border-top: 2px solid #cfd2d5;
  border-bottom: 2px solid #cfd2d5;
}

.panel-head h2 {
  flex: 1;
  margin: 0;
  font-size: 15px;
  line-height: 20px;
}

.panel-head button {
  margin-left: 11px;
}

.panel-head .hide {
  margin-left: 15px;
}

.panel-body {
  display: flex;
  flex: 1;
  min-height: 0;
  padding: 8px 0 3px;
}

.panel-list {
  display: flex;
  flex: 1;
  flex-direction: column;
  min-width: 0;
}

.tree {
  flex: 1;
  min-height: 0;
  margin: 0;
  padding: 0;
  overflow: hidden;
  list-style: none;
  color: #5e5e5e;
}

.tree li:first-child {
  margin-top: -12px;
}

.tree li {
  display: flex;
  align-items: center;
  height: 30px;
  padding-left: 19px;
  white-space: nowrap;
}

.tree .l2 {
  padding-left: 44px;
}

.tree .l3 {
  padding-left: 69px;
}

.tree svg {
  margin-right: 6px;
}

.twist {
  flex: none;
  width: 18px;
}

.twist::before {
  content: "";
  display: block;
  width: 0;
}

.closed::before {
  border: 6px solid transparent;
  border-left: 9px solid #868686;
  border-right: 0;
}

.opened::before {
  margin-left: -2px;
  border: 6px solid transparent;
  border-top: 9px solid #868686;
  border-bottom: 0;
}

.focus {
  height: 28px;
  line-height: 28px;
  outline: 1px dotted #222;
}

/* scroll bars */
.hbar,
.vbar {
  display: flex;
  flex: none;
  border: 1px solid #cfd2d5;
  background: #eeefef;
}

.hbar {
  height: 22px;
  margin-left: 9px;
}

.vbar {
  flex-direction: column;
  width: 23px;
  margin-bottom: 22px;
}

.bar-btn {
  flex: none;
  justify-content: center;
  width: 20px;
  height: 20px;
  border: 1px solid #cfd2d5;
  background: #f6f6f6;
}

.thumb {
  display: flex;
  flex: 1;
  align-items: center;
  justify-content: center;
  border: 2px solid #cfd2d5;
}

.hbar .thumb {
  margin-right: 12px;
  background: linear-gradient(#eaeaea, #fff);
}

.vbar .thumb {
  margin-top: 37px;
  background: linear-gradient(90deg, #e6e6e6, #fff);
}

.grip {
  width: 14px;
  height: 9px;
  background: repeating-linear-gradient(90deg, #bbb 0 2px, transparent 2px 4px);
}

.vbar .grip {
  width: 9px;
  height: 14px;
  background: repeating-linear-gradient(#bbb 0 2px, transparent 2px 4px);
}

.arrow {
  border: 4px solid transparent;
}

.arrow.left {
  border-right: 5px solid #777;
  border-left: 0;
}

.arrow.right {
  border-left: 5px solid #777;
  border-right: 0;
}

.arrow.up {
  border-bottom: 5px solid #777;
  border-top: 0;
}

.arrow.down {
  border-top: 5px solid #777;
  border-bottom: 0;
}

/* graphics window */
.view {
  position: relative;
  flex: 1;
  min-width: 0;
}

.view-tools {
  position: absolute;
  top: 9px;
  left: 50%;
  display: flex;
  padding: 0 6px;
  border: 1px solid #cfd2d5;
  background: #eeefef;
  transform: translateX(-50%);
}

.view-tools button {
  position: relative;
  justify-content: center;
  width: 34px;
  height: 33px;
  border: 1px solid #dcdee0;
  background: #fff;
}

.view-tools svg {
  width: 22px;
  height: 22px;
}

.view-tools .on,
.status .on {
  border: 1px solid #b9bcc0;
  border-top: 2px solid #8f9296;
  background: linear-gradient(#dcdddf, #f2f2f2);
}

.menu::after {
  content: "";
  position: absolute;
  right: 3px;
  bottom: 4px;
  border-left: 5px solid transparent;
  border-bottom: 5px solid #555;
}

.model {
  width: 100%;
  height: 100%;
}

.wave {
  fill: none;
  stroke: #1a1fd0;
  stroke-width: 1.5;
}

.curve {
  fill: none;
  stroke: #27a5d6;
  stroke-width: 1.3;
}

.plane {
  fill: none;
  stroke: #a2733f;
  stroke-width: 1;
}

.axis {
  fill: none;
  stroke: #77787a;
  stroke-width: 1;
}

.csys-label {
  fill: #8c6040;
  font: 14px "Liberation Mono", monospace;
}

/* status bar */
.status {
  display: flex;
  align-items: center;
  flex: none;
  height: 41px;
  padding: 0 0 2px 8px;
  border-top: 2px solid #98989a;
  background: #eeefef;
}

.status > button {
  justify-content: center;
  width: 27px;
  height: 28px;
  margin-right: 5px;
  border: 1px solid #c9ccd0;
}

.message {
  flex: 1;
  margin: 0 0 0 6px;
  padding-left: 9px;
  border-left: 2px solid #fff;
  font-size: 14px;
}

.message::before {
  content: "";
  display: inline-block;
  width: 6px;
  height: 6px;
  margin: 0 6px 3px 0;
  border-radius: 50%;
  background: #1d5a86;
}

.cell {
  display: flex;
  align-items: center;
  height: 32px;
  border-left: 2px solid #dadcdd;
}

.cell:nth-of-type(1) {
  width: 37px;
}

.lights {
  gap: 2px;
  width: 45px;
  padding-left: 6px;
}

.lights i {
  width: 7px;
  height: 7px;
  border-radius: 50%;
  background: #ccc;
}

.lights .ok {
  width: 13px;
  height: 13px;
  background: #44cc5c;
}

.flag {
  width: 51px;
  padding-left: 5px;
}

.find {
  width: 58px;
  padding-left: 3px;
}

.find button {
  justify-content: center;
  width: 50px;
  height: 29px;
  border: 2px solid #c6c9cc;
  border-radius: 3px;
  background: linear-gradient(#fff, #ededed);
}

.filter {
  justify-content: flex-end;
  width: 342px;
  padding-right: 27px;
}

.filter select {
  width: 205px;
  height: 24px;
  margin-right: -22px;
  padding: 0 8px;
  border: 1px solid #c9ccd0;
  border-radius: 0;
  background: #f8f8f8;
  color: inherit;
  font: inherit;
  line-height: 20px;
  appearance: none;
}

.filter .caret {
  position: relative;
  border-top-color: #a8a8a8;
  pointer-events: none;
}

.taskbar {
  position: relative;
  display: flex;
  flex: none;
  height: 10px;
  padding: 0 94px 0 248px;
  overflow: hidden;
  background: #22231b;
  font-size: 12px;
}

.taskbar i {
  width: 60px;
  background: #505048;
}

.taskbar .wall {
  margin: 0 62px 0 auto;
  color: #3c3c34;
  line-height: 16px;
}

.taskbar time {
  padding-top: 2px;
  color: #fff;
  font-size: 13px;
}

.watermark {
  position: absolute;
  right: 6px;
  bottom: 6px;
  display: flex;
  gap: 2px;
  height: 58px;
  background: rgba(255, 255, 255, 0.3);
  pointer-events: none;
}

.watermark svg {
  width: 58px;
  height: 58px;
  fill: none;
  stroke: rgba(130, 165, 195, 0.7);
  stroke-width: 4;
}

.watermark .flame {
  stroke: rgba(215, 165, 115, 0.7);
}

.watermark div {
  display: flex;
  flex-direction: column;
  align-items: center;
  width: 145px;
}

.watermark strong {
  background: linear-gradient(160deg, #9cbfd8 30%, #93c9a2 50%, #9cbfd8 75%);
  background-clip: text;
  color: transparent;
  font-size: 29px;
  line-height: 34px;
}

.watermark span {
  color: #a9cbd8;
  font: 16px/20px "Liberation Sans", sans-serif;
}
```
